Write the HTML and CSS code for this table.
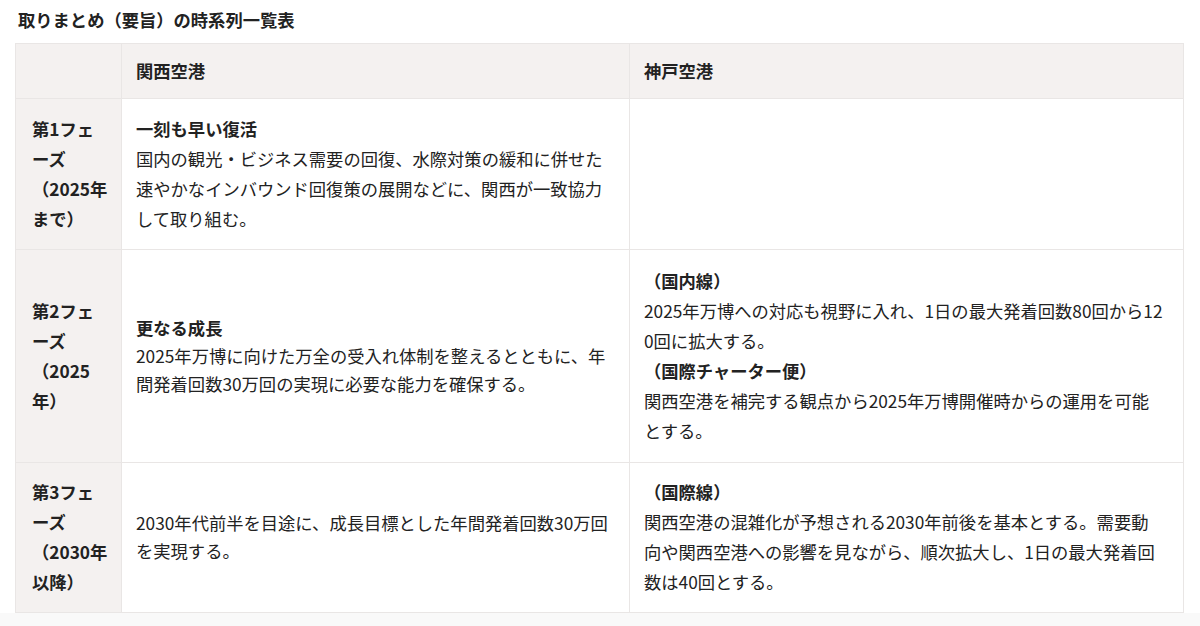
FILE: index.html
```html
<!DOCTYPE html>
<html lang="ja">
<head>
<meta charset="utf-8">
<title>取りまとめ（要旨）の時系列一覧表</title>
<link rel="stylesheet" href="styles.css">
</head>
<body>
<main class="page">
  <h2 class="title">取りまとめ（要旨）の時系列一覧表</h2>
  <table class="timeline">
    <colgroup>
      <col class="col-phase">
      <col class="col-kix">
      <col class="col-ukb">
    </colgroup>
    <thead>
      <tr>
        <th class="corner"></th>
        <th>関西空港</th>
        <th>神戸空港</th>
      </tr>
    </thead>
    <tbody>
      <tr class="r1">
        <th class="phase">第1フェ<br>ーズ<br>（2025年<br>まで）</th>
        <td>
          <p class="head">一刻も早い復活</p>
          <p>国内の観光・ビジネス需要の回復、水際対策の緩和に併せた<br>速やかなインバウンド回復策の展開などに、関西が一致協力<br>して取り組む。</p>
        </td>
        <td></td>
      </tr>
      <tr class="r2">
        <th class="phase">第2フェ<br>ーズ<br>（2025<br>年）</th>
        <td class="tight">
          <p class="head">更なる成長</p>
          <p>2025年万博に向けた万全の受入れ体制を整えるとともに、年<br>間発着回数30万回の実現に必要な能力を確保する。</p>
        </td>
        <td class="tall">
          <p class="head">（国内線）</p>
          <p>2025年万博への対応も視野に入れ、1日の最大発着回数80回から12<br>0回に拡大する。</p>
          <p class="head">（国際チャーター便）</p>
          <p>関西空港を補完する観点から2025年万博開催時からの運用を可能<br>とする。</p>
        </td>
      </tr>
      <tr class="r3">
        <th class="phase">第3フェ<br>ーズ<br>（2030年<br>以降）</th>
        <td class="tight">
          <p>2030年代前半を目途に、成長目標とした年間発着回数30万回<br>を実現する。</p>
        </td>
        <td>
          <p class="head">（国際線）</p>
          <p>関西空港の混雑化が予想される2030年前後を基本とする。需要動<br>向や関西空港への影響を見ながら、順次拡大し、1日の最大発着回<br>数は40回とする。</p>
        </td>
      </tr>
    </tbody>
  </table>
  <div class="after"></div>
</main>
</body>
</html>
```

FILE: styles.css
```css
* {
  box-sizing: border-box;
}

html, body {
  margin: 0;
  padding: 0;
  background: #ffffff;
}

body {
  font-family: "Noto Sans CJK JP", "Noto Sans", sans-serif;
  color: #222222;
  font-size: 17.3px;
}

.page {
  padding: 11px 0 0 15px;
  width: 1200px;
}

.title {
  margin: 0 0 14px 3px;
  font-size: 17.3px;
  line-height: 18px;
  font-weight: 700;
  color: #222222;
}

.timeline {
  border-collapse: collapse;
  table-layout: fixed;
  width: 1168px;
}

.col-phase { width: 106px; }
.col-kix { width: 508px; }
.col-ukb { width: 554px; }

.timeline th,
.timeline td {
  border: 1px solid #e9e6e5;
  padding: 15px 14px;
  line-height: 30px;
  text-align: left;
  vertical-align: middle;
  font-size: 17.3px;
}

.timeline thead th {
  background: #f4f1f0;
  font-weight: 700;
  padding: 12px 14px;
}

.timeline th.phase {
  background: #f4f1f0;
  font-weight: 700;
  padding: 15px 10px 15px 16px;
}

.timeline td {
  font-weight: 400;
  background: #ffffff;
  white-space: nowrap;
}

.timeline p {
  margin: 0;
}

.timeline p.head {
  font-weight: 700;
}

.timeline td.tight {
  line-height: 28px;
}

.timeline td.tall {
  padding-top: 16px;
  padding-bottom: 16px;
}

.timeline .r3 th.phase,
.timeline .r3 td {
  padding-top: 14px;
  padding-bottom: 15px;
}

.after {
  height: 14px;
  margin-left: -15px;
  background: #f9f9f9;
}
```
